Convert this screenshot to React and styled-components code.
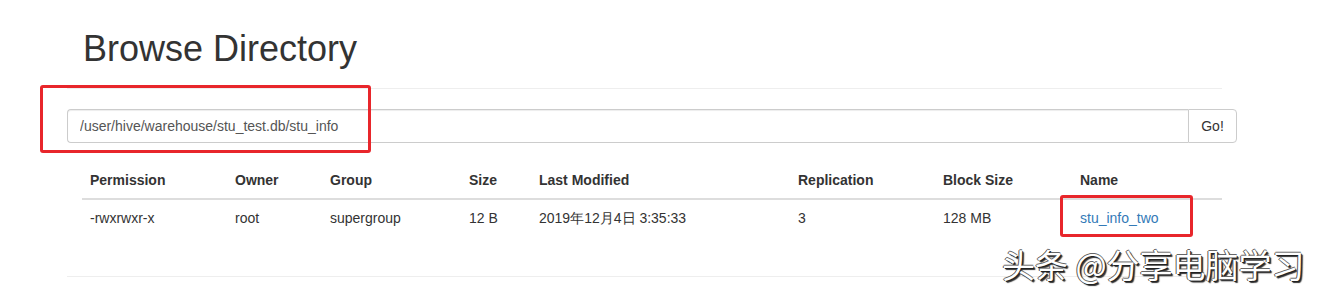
import styled, { createGlobalStyle } from "styled-components";

const GlobalStyle = createGlobalStyle`
  html, body {
    margin: 0;
    padding: 0;
    background: #fff;
  }
  body {
    font-family: "Liberation Sans", Arial, sans-serif;
    font-size: 14px;
    line-height: 20px;
    color: #333;
  }
`;

const columns = [
  { key: "permission", label: "Permission", width: 145 },
  { key: "owner", label: "Owner", width: 95 },
  { key: "group", label: "Group", width: 139 },
  { key: "size", label: "Size", width: 70 },
  { key: "modified", label: "Last Modified", width: 259 },
  { key: "replication", label: "Replication", width: 145 },
  { key: "blockSize", label: "Block Size", width: 137 },
  { key: "name", label: "Name", width: 150 },
];

const rows = [
  {
    permission: "-rwxrwxr-x",
    owner: "root",
    group: "supergroup",
    size: "12 B",
    modified: "2019年12月4日 3:35:33",
    replication: "3",
    blockSize: "128 MB",
    name: "stu_info_two",
  },
];

const App = () => {
  return (
    <Page>
      <GlobalStyle />
      <Header>
        <Title>Browse Directory</Title>
      </Header>
      <InputGroup>
        <PathInput defaultValue="/user/hive/warehouse/stu_test.db/stu_info" />
        <GoButton>Go!</GoButton>
        <Mark style={{ left: -27, top: -24, width: 331, height: 68 }} />
      </InputGroup>
      <Table>
        <colgroup>
          {columns.map((c) => (
            <col key={c.key} style={{ width: c.width }} />
          ))}
        </colgroup>
        <thead>
          <tr>
            {columns.map((c) => (
              <Th key={c.key}>{c.label}</Th>
            ))}
          </tr>
        </thead>
        <tbody>
          {rows.map((r) => (
            <tr key={r.name}>
              {columns.map((c) => (
                <Td key={c.key}>
                  {c.key === "name" ? (
                    <NameCell>
                      <Link href="#">{r.name}</Link>
                      <Mark style={{ left: -20, top: -13, width: 133, height: 42 }} />
                    </NameCell>
                  ) : (
                    r[c.key]
                  )}
                </Td>
              ))}
            </tr>
          ))}
        </tbody>
      </Table>
      <Footer>
        <Watermark>头条 @分享电脑学习</Watermark>
      </Footer>
    </Page>
  );
};

const Page = styled.div`
  width: 1320px;
  height: 296px;
  padding: 0 0 0 67px;
  box-sizing: border-box;
  overflow: hidden;
  position: relative;
`;

const Header = styled.div`
  width: 1155px;
  padding: 29px 0 19px 16px;
  border-bottom: 1px solid #eee;
  box-sizing: border-box;
`;

const Title = styled.h1`
  margin: 0;
  font-size: 36px;
  font-weight: 500;
  line-height: 40px;
  color: #333;
`;

const InputGroup = styled.div`
  position: relative;
  display: flex;
  width: 1170px;
  height: 34px;
  margin-top: 20px;
`;

const PathInput = styled.input`
  flex: 1;
  height: 34px;
  box-sizing: border-box;
  padding: 6px 12px;
  border: 1px solid #ccc;
  border-right: none;
  border-radius: 4px 0 0 4px;
  font-family: "Liberation Sans", Arial, sans-serif;
  font-size: 14px;
  color: #555;
  outline: none;
  box-shadow: inset 0 1px 1px rgba(0, 0, 0, 0.075);
`;

const GoButton = styled.button`
  width: 49px;
  height: 34px;
  box-sizing: border-box;
  border: 1px solid #ccc;
  border-radius: 0 4px 4px 0;
  background: #fff;
  font-family: "Liberation Sans", Arial, sans-serif;
  font-size: 14px;
  color: #333;
  padding: 0;
  cursor: pointer;
`;

const Mark = styled.span`
  position: absolute;
  border: 3px solid #e8262b;
  border-radius: 3px;
  box-sizing: border-box;
  pointer-events: none;
`;

const Table = styled.table`
  width: 1140px;
  margin: 19px 0 0 15px;
  border-collapse: collapse;
  table-layout: fixed;
`;

const Th = styled.th`
  text-align: left;
  font-weight: bold;
  padding: 8px;
  line-height: 20px;
  border-bottom: 2px solid #ddd;
`;

const Td = styled.td`
  padding: 8px;
  line-height: 20px;
  white-space: nowrap;
`;

const NameCell = styled.span`
  position: relative;
  display: inline-block;
`;

const Link = styled.a`
  color: #337ab7;
  text-decoration: none;
`;

const Footer = styled.div`
  position: relative;
  width: 1155px;
  margin-top: 40px;
  border-top: 1px solid #eee;
`;

const Watermark = styled.span`
  position: absolute;
  left: 935px;
  top: -32px;
  font-family: "Noto Sans CJK SC", "Noto Sans", sans-serif;
  font-size: 33px;
  line-height: 38px;
  color: #fff;
  white-space: nowrap;
  text-shadow: 1px 1px 0 #222, -1px 0 0 #555, 0 -1px 0 #666, 2px 2px 1px #333;
`;

export default App;
